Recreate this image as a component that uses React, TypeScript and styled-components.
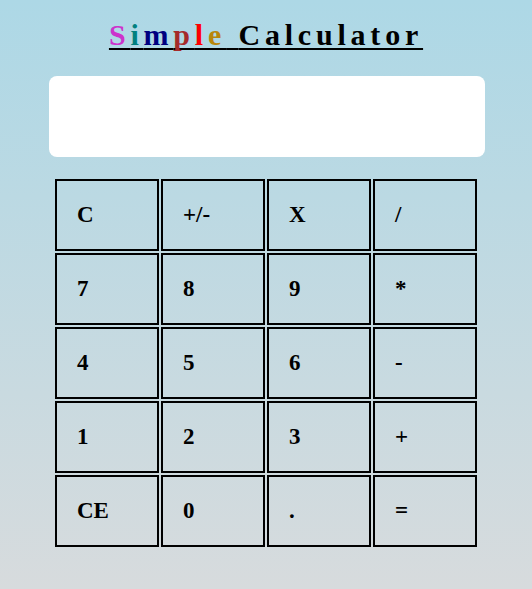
import React from "react";
import styled, { createGlobalStyle } from "styled-components";

const Global = createGlobalStyle`
  html, body { margin: 0; padding: 0; }
  body {
    min-height: 589px;
    background: linear-gradient(to bottom, #add8e6, #d7dbdd);
    font-family: "Liberation Serif", "Times New Roman", serif;
  }
`;

const Page = styled.div`
  display: flex;
  flex-direction: column;
  align-items: center;
  padding-top: 18px;
`;

const Title = styled.h1`
  margin: 0;
  font-family: "Liberation Serif", "Times New Roman", serif;
  font-size: 30px;
  line-height: 34px;
  font-weight: bold;
  letter-spacing: 4.8px;
  color: #000;
  text-decoration: underline;
  text-decoration-thickness: 2px;
  text-underline-offset: 3px;
  text-decoration-skip-ink: none;
`;

const Letter = styled.span<{ $c: string }>`
  color: ${(p) => p.$c};
`;

const Display = styled.div`
  margin-top: 24px;
  width: 436px;
  height: 81px;
  background: #fff;
  border-radius: 8px;
  margin-left: 1px;
`;

const Keypad = styled.div`
  margin-top: 22px;
  display: grid;
  grid-template-columns: repeat(4, 104px);
  grid-auto-rows: 72px;
  gap: 2px;
`;

const Key = styled.button`
  box-sizing: border-box;
  margin: 0;
  border: 2px solid #000;
  background: transparent;
  text-align: left;
  padding: 0 0 0 20px;
  font-family: "Liberation Serif", "Times New Roman", serif;
  font-size: 23px;
  font-weight: bold;
  color: #000;
`;

const title: [string, string][] = [
  ["S", "#cc33cc"],
  ["i", "#008080"],
  ["m", "#000080"],
  ["p", "#a52a2a"],
  ["l", "#ff0000"],
  ["e", "#b8860b"],
];

const keys = ["C", "+/-", "X", "/", "7", "8", "9", "*", "4", "5", "6", "-", "1", "2", "3", "+", "CE", "0", ".", "="];

export default function App() {
  return (
    <>
      <Global />
      <Page>
        <Title>
          {title.map(([ch, c]) => (
            <Letter key={ch} $c={c}>
              {ch}
            </Letter>
          ))}{" "}
          Calculator
        </Title>
        <Display />
        <Keypad>
          {keys.map((k) => (
            <Key key={k}>{k}</Key>
          ))}
        </Keypad>
      </Page>
    </>
  );
}
